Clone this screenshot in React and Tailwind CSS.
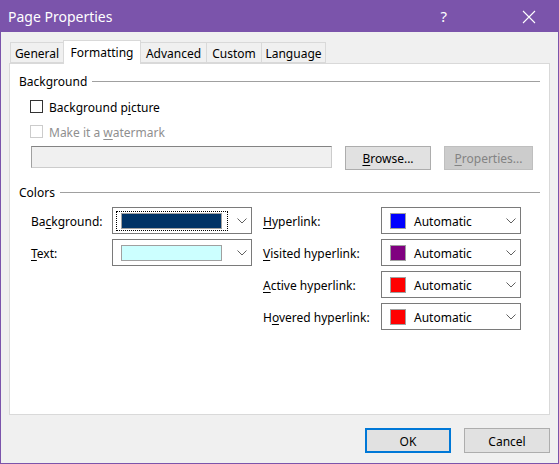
import React from 'react';

const font = { fontFamily: '"Noto Sans", "Liberation Sans", sans-serif' };

const Chevron = () => (
  <svg width="10" height="6" viewBox="0 0 10 6" className="shrink-0">
    <path d="M0.5 0.5 L5 5 L9.5 0.5" fill="none" stroke="#606060" strokeWidth="1" />
  </svg>
);

const U = ({ children }) => <span className="underline underline-offset-2">{children}</span>;

const GroupHeader = ({ label, className = '' }) => (
  <div className={`flex items-center h-[16px] ml-[9px] mr-[9px] ${className}`}>
    <span className="leading-none pt-[2px]">{label}</span>
    <div className="flex-1 h-px bg-[#a0a0a0] ml-[5px]" />
  </div>
);

const ColorCombo = ({ swatch, label, focused }) => (
  <div className="w-[140px] h-[27px] border border-[#7a7a7a] bg-white flex items-center">
    {label ? (
      <div className="flex items-center w-[124px] pl-[8px]">
        <div className="w-[16px] h-[16px] border border-[#a0a0a0]" style={{ background: swatch }} />
        <span className="ml-[8px] leading-none pt-[2px]">{label}</span>
      </div>
    ) : (
      <div className="w-[124px] pl-[3px]">
        <div
          className={`w-[112px] h-[20px] flex items-center pl-[4px] ${
            focused ? 'border border-dotted border-black' : 'border border-transparent'
          }`}
        >
          <div className="w-[101px] h-[16px] border border-[#a0a0a0]" style={{ background: swatch }} />
        </div>
      </div>
    )}
    <Chevron />
  </div>
);

const tabs = [
  { name: 'General', w: 'w-[54px]' },
  { name: 'Formatting', w: 'w-[78px]', active: true },
  { name: 'Advanced', w: 'w-[67px]' },
  { name: 'Custom', w: 'w-[56px]' },
  { name: 'Language', w: 'w-[65px]' },
];

export default function App() {
  return (
    <div
      className="w-[559px] h-[464px] border border-[#7b54ab] flex flex-col text-[12px] text-black bg-[#f0f0f0] overflow-hidden"
      style={font}
    >
      {/* Title bar */}
      <div className="h-[31px] bg-[#7b54ab] flex items-center text-white shrink-0">
        <span className="ml-[7px] text-[14px] leading-none">Page Properties</span>
        <div className="flex-1" />
        <span className="text-[15px] leading-none mr-[75px]">?</span>
        <svg width="14" height="14" viewBox="0 0 14 14" className="mr-[22px]">
          <path d="M1 1 L13 13 M13 1 L1 13" stroke="white" strokeWidth="1.1" />
        </svg>
      </div>

      {/* Body */}
      <div className="flex-1 flex flex-col px-[8px] pt-[8px]">
        {/* Tabs */}
        <div className="flex items-end h-[24px] -mb-px pl-[1px] relative z-10">
          {tabs.map((t) =>
            t.active ? (
              <div
                key={t.name}
                className={`${t.w} h-[24px] -ml-px bg-white border border-b-0 border-[#d9d9d9] flex items-start justify-center pt-[3px]`}
              >
                {t.name}
              </div>
            ) : (
              <div
                key={t.name}
                className={`${t.w} h-[21px] mb-px bg-[#f0f0f0] border border-[#d9d9d9] -ml-px first:ml-0 flex items-center justify-center pt-[2px]`}
              >
                {t.name}
              </div>
            )
          )}
        </div>

        {/* Panel */}
        <div className="h-[352px] bg-white border border-[#d9d9d9] flex flex-col">
          <GroupHeader label="Background" className="mt-[9px]" />

          <div className="flex items-center h-[14px] mt-[10px] ml-[20px]">
            <div className="w-[13px] h-[13px] border border-[#333333] bg-white" />
            <span className="ml-[6px] leading-none pt-[3px]">
              Background p<U>i</U>cture
            </span>
          </div>

          <div className="flex items-center h-[14px] mt-[11px] ml-[20px] text-[#8f8f8f]">
            <div className="w-[13px] h-[13px] border border-[#cccccc] bg-white" />
            <span className="ml-[6px] leading-none pt-[3px]">
              Make it a <U>w</U>atermark
            </span>
          </div>

          <div className="flex items-start h-[24px] mt-[8px] ml-[21px]">
            <div className="w-[301px] h-[22px] bg-[#f0f0f0] border border-[#cccccc] border-t-[#838383] border-l-[#a0a0a0]" />
            <button className="ml-[13px] w-[86px] h-[24px] bg-[#e1e1e1] border border-[#adadad] leading-none pt-[2px]">
              <U>B</U>rowse...
            </button>
            <button className="ml-[13px] w-[89px] h-[24px] bg-[#cccccc] border border-[#bfbfbf] text-[#838383] leading-none pt-[2px]">
              <U>P</U>roperties...
            </button>
          </div>

          <GroupHeader label="Colors" className="mt-[14px]" />

          <div className="flex mt-[7px] ml-[21px]">
            <div className="flex flex-col gap-[5px]">
              <div className="flex items-center">
                <span className="w-[81px] pt-[2px]">
                  Ba<U>c</U>kground:
                </span>
                <ColorCombo swatch="#003366" focused />
              </div>
              <div className="flex items-center">
                <span className="w-[81px] pt-[2px]">
                  <U>T</U>ext:
                </span>
                <ColorCombo swatch="#ccffff" />
              </div>
            </div>

            <div className="flex flex-col gap-[5px] ml-[11px]">
              {[
                { pre: '', key: 'H', post: 'yperlink:', c: '#0000ff' },
                { pre: '', key: 'V', post: 'isited hyperlink:', c: '#800080' },
                { pre: '', key: 'A', post: 'ctive hyperlink:', c: '#ff0000' },
                { pre: 'H', key: 'o', post: 'vered hyperlink:', c: '#ff0000' },
              ].map((r) => (
                <div key={r.post} className="flex items-center">
                  <span className="w-[118px] pt-[2px]">
                    {r.pre}
                    <U>{r.key}</U>
                    {r.post}
                  </span>
                  <ColorCombo swatch={r.c} label="Automatic" />
                </div>
              ))}
            </div>
          </div>
        </div>

        {/* Footer buttons */}
        <div className="flex justify-end mt-[13px] gap-[13px]">
          <button className="w-[86px] h-[25px] bg-[#e1e1e1] border-2 border-[#0078d7] leading-none pt-[2px]">OK</button>
          <button className="w-[86px] h-[25px] bg-[#e1e1e1] border border-[#adadad] leading-none pt-[2px]">Cancel</button>
        </div>
      </div>
    </div>
  );
}
